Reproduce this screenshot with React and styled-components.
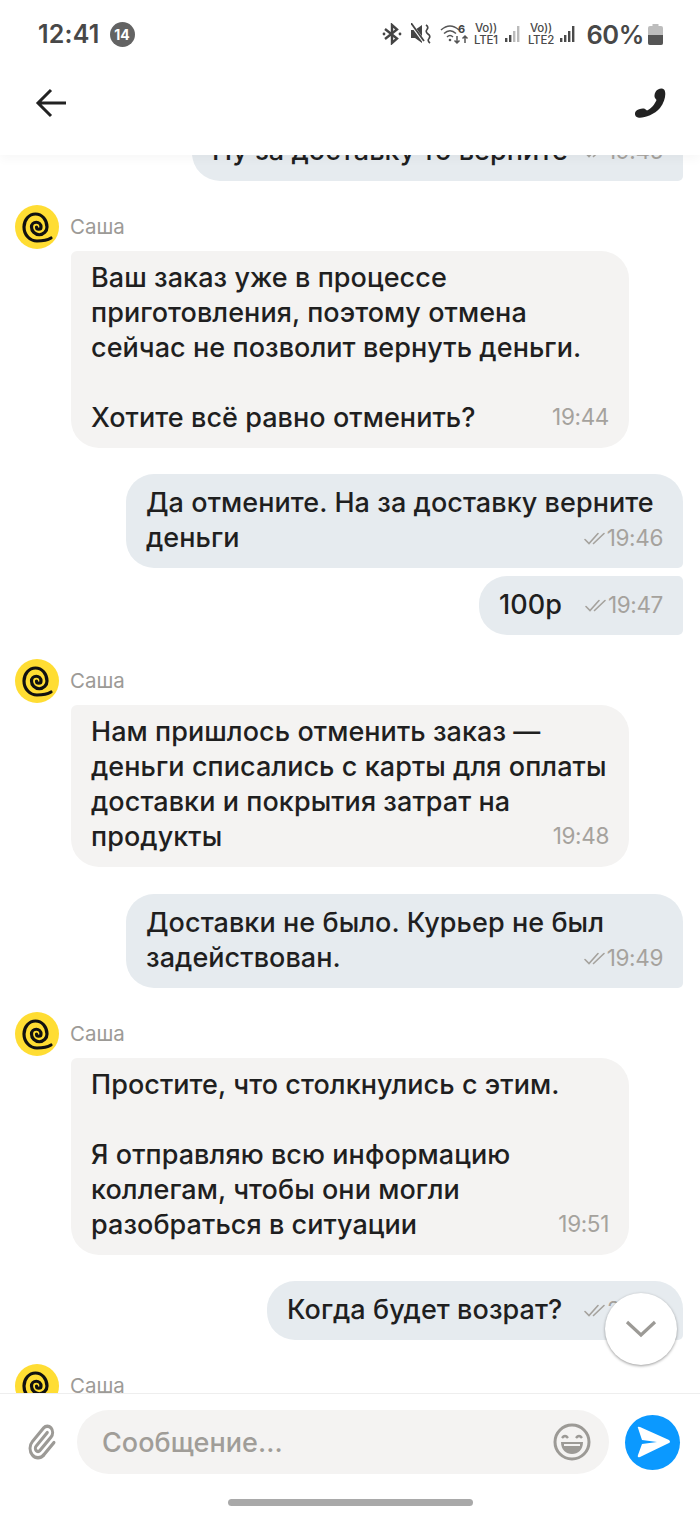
import React from "react";
import styled, { createGlobalStyle } from "styled-components";

const Global = createGlobalStyle`
  html, body { margin: 0; padding: 0; background: #fff; }
  * { box-sizing: border-box; }
`;
const FONT = `Inter, "Noto Sans", "Liberation Sans", sans-serif`;

const Screen = styled.div`
  position: relative; width: 700px; height: 1517px; overflow: hidden;
  display: flex; flex-direction: column; background: #fff; font-family: ${FONT}; color: #1f1f1f;
`;
const Top = styled.header`
  position: relative; z-index: 2; height: 155px; flex: none; background: #fff;
  box-shadow: 0 4px 10px rgba(0,0,0,.035);
`;
const StatusBar = styled.div`
  height: 68px; display: flex; align-items: center; padding: 0 37px 0 38px; color: #444;
`;
const Clock = styled.span`font-size: 25px; font-weight: 600; letter-spacing: .2px; color: #484848;`;
const Badge = styled.span`
  margin-left: 10px; width: 25px; height: 25px; border-radius: 50%; background: #636363; color: #fff;
  font-size: 14px; font-weight: 700; display: flex; align-items: center; justify-content: center;
`;
const StatusRight = styled.div`margin-left: auto; display: flex; align-items: center; gap: 6px;`;
const Volte = styled.span`
  display: flex; flex-direction: column; align-items: center; width: 25px;
  font-size: 11.5px; line-height: 12px; font-weight: 500; color: #4a4a4a; letter-spacing: -.2px;
`;
const Percent = styled.span`font-size: 25.5px; font-weight: 600; color: #484848; margin-left: 3px; letter-spacing: -.4px;`;
const NavBar = styled.nav`
  height: 87px; display: flex; align-items: flex-start; justify-content: space-between;
  padding: 19px 34px 0 35px;
`;
const Chat = styled.main`
  flex: 1; min-height: 0; overflow: hidden; display: flex; flex-direction: column;
  padding: 0 17px 0 15px;
`;
const Feed = styled.div`margin-top: -33px; display: flex; flex-direction: column; flex: none;`;
const Sender = styled.div`
  display: flex; align-items: center; gap: 11px; height: 44px; margin-top: ${p => p.$gap || 24}px;
  margin-bottom: 2px; font-size: 20.5px; color: #9c9a96; flex: none;
`;
const SenderName = styled.span`margin-top: -2px;`;
const Bubble = styled.div`
  flex: none; font-size: 27px; line-height: 35px; font-weight: 500; letter-spacing: .06px;
  ${p => p.$out ? `
    align-self: flex-end; background: #e6ebef; padding: 10.5px 20px 13.5px 20px;
    margin-top: ${p.$gap}px; width: ${p.$width}px;
    border-radius: 28px 5px 5px 28px;
    border-top-right-radius: ${p.$first ? "28px" : "5px"};
  ` : `
    margin-left: 56px; width: 558px; background: #f4f3f2; padding: 9px 20px 13px 20px;
    border-radius: 6px 28px 28px 28px;
  `}
`;
const Line = styled.div`min-height: 35px;`;
const LastLine = styled.div`display: flex; align-items: center; justify-content: space-between; gap: 12px;`;
const Meta = styled.span`
  display: flex; align-items: center; gap: 1px; font-size: 22.5px; font-weight: 400; color: #a5a29d; letter-spacing: -.35px;
  margin-top: ${p => p.$in ? "-2px" : "0"};
`;
const Ticks = styled.svg`width: 22px; height: 14px; flex: none; margin-top: 2px;`;
const ScrollDown = styled.button`
  position: absolute; left: 605px; top: 1293px; width: 72px; height: 72px; z-index: 3; padding: 0; border: 0;
  border-radius: 50%; background: #fff; box-shadow: 0 1px 3px rgba(0,0,0,.4);
  display: flex; align-items: center; justify-content: center;
`;
const Footer = styled.footer`
  position: relative; z-index: 2; height: 124px; flex: none; background: #fff; border-top: 1px solid #eeeeee;
  display: flex; flex-direction: column; align-items: center;
`;
const Composer = styled.div`
  width: 100%; display: flex; align-items: center; padding: 16px 20px 0 26px;
`;
const Attach = styled.svg`width: 32px; height: 38px; flex: none; margin-right: 19px;`;
const Field = styled.div`
  width: 532px; height: 64px; border-radius: 32px; background: #f4f3f2; display: flex; align-items: center;
  justify-content: space-between; padding: 0 18px 0 25px; font-size: 27px; font-weight: 500; color: #a09d98; letter-spacing: .05px;
`;
const SendBtn = styled.button`
  margin-left: 16px; width: 55px; height: 55px; padding: 0; border: 0; border-radius: 50%; background: #0b99ff;
  display: flex; align-items: center; justify-content: center;
`;
const HomeBar = styled.div`width: 245px; height: 7px; border-radius: 4px; background: #a9a9a9; margin-top: 25px;`;

const Avatar = () => (
  <svg width="44" height="44" viewBox="0 0 44 44">
    <circle cx="22" cy="22" r="22" fill="#ffdd33" />
    <path d="M21.5 22 A2.25 2.25 0 0 0 26 22 A4.75 4.75 0 0 0 16.5 22 A7.75 7.75 0 0 0 32 22 A11.5 13 0 0 0 9 22 C9 30 15 36 22 36 C27 36 32 35.5 36 33"
      fill="none" stroke="#111" strokeWidth="3.2" strokeLinecap="round" />
  </svg>
);
const Tick = () => (
  <Ticks viewBox="0 0 22 14">
    <path d="M1 8.5 L5 12.5 L14 2.5 M9.5 12.5 L20 2.5" fill="none" stroke="#a5a29d" strokeWidth="1.6" strokeLinecap="round" />
  </Ticks>
);
const Out = ({ lines, time, width = 557, first, gap }) => (
  <Bubble $out $width={width} $first={first} $gap={gap}>
    {lines.slice(0, -1).map(l => <Line key={l}>{l}</Line>)}
    <LastLine><span>{lines[lines.length - 1]}</span><Meta><Tick />{time}</Meta></LastLine>
  </Bubble>
);
const In = ({ lines, time, gap }) => (
  <>
    <Sender $gap={gap}><Avatar /><SenderName>Саша</SenderName></Sender>
    <Bubble>
      {lines.slice(0, -1).map((l, i) => <Line key={i}>{l}</Line>)}
      <LastLine><span>{lines[lines.length - 1]}</span><Meta $in>{time}</Meta></LastLine>
    </Bubble>
  </>
);

const Signal = ({ dim }) => (
  <svg width="18" height="20" viewBox="0 0 18 20">
    {[[1, 14, 4], [5, 11, 7], [9, 7, 11], [13, 2, 16]].map(([x, y, h], i) => (
      <rect key={x} x={x} y={y} width="2.4" height={h} fill={dim && i > 1 ? "#bbb" : "#4a4a4a"} />
    ))}
  </svg>
);

export default function App() {
  return (
    <Screen>
      <Global />
      <Top>
        <StatusBar>
          <Clock>12:41</Clock>
          <Badge>14</Badge>
          <StatusRight>
            <svg width="20" height="22" viewBox="0 0 20 22" fill="none" stroke="#444" strokeWidth="2.4" style={{ marginRight: 3 }}>
              <path d="M3 6 L15 15.5 L10 20 V2 L15 6.5 L3 16" />
              <circle cx="2" cy="11" r="1.4" fill="#444" stroke="none" /><circle cx="18" cy="11" r="1.4" fill="#444" stroke="none" />
            </svg>
            <svg width="20" height="22" viewBox="0 0 20 22" style={{ marginRight: 3 }}>
              <path d="M0 7 H4 L11 2 V20 L4 15 H0 Z" fill="#444" />
              <path d="M0 1 L14 20" stroke="#fff" strokeWidth="3" />
              <path d="M0 0 L13 18" stroke="#444" strokeWidth="1.8" />
              <path d="M15 2 q3 2 1 4.5 q-2 2 1 4.5 q3 2 1 4.5 q-2 2 1 4.5" fill="none" stroke="#444" strokeWidth="1.7" />
            </svg>
            <svg width="29" height="22" viewBox="0 0 29 22" fill="none" stroke="#555" strokeWidth="1.5" style={{ marginRight: -2 }}>
              <path d="M1 7 Q10 -1 19 7 M4 10.5 Q10 5 16 10.5 M7 14 Q10 11 13 14" />
              <circle cx="10" cy="17" r="1.3" fill="#555" stroke="none" />
              <text x="18" y="10" fontSize="11" fontWeight="700" fill="#444" stroke="none" fontFamily="Inter">6</text>
              <path d="M17 13 V20 M14.5 17.5 L17 20 L19.5 17.5 M25 20 V13 M22.5 15.5 L25 13 L27.5 15.5" />
            </svg>
            <Volte>Vo))<span>LTE1</span></Volte>
            <Signal dim />
            <Volte>Vo))<span>LTE2</span></Volte>
            <Signal />
            <Percent>60%</Percent>
            <svg width="15" height="21" viewBox="0 0 15 21" style={{ marginLeft: -2 }}>
              <rect x="4.5" y="0" width="6" height="3" fill="#bdbdbd" />
              <rect x="0" y="2" width="15" height="19" rx="2" fill="#bdbdbd" />
              <path d="M0 11 H15 V19 a2 2 0 0 1 -2 2 H2 a2 2 0 0 1 -2 -2 Z" fill="#555" />
            </svg>
          </StatusRight>
        </StatusBar>
        <NavBar>
          <svg width="32" height="32" viewBox="0 0 32 32" fill="none" stroke="#222" strokeWidth="3">
            <path d="M31 16 H4 M16 3 L3 16 L16 29" />
          </svg>
          <svg width="32" height="32" viewBox="0 0 32 32">
            <path d="M21.5 5 C23 2 28 0.5 30 2.5 C32.5 5 31.5 14 26 21 C20 28 9 31.5 4 30.5 C1 30 0 26 2 24 C4 22 9 21 11 22 L13 23.5 C17 22 21 17 22.5 13 L21 11 C20 9 20.5 7 21.5 5 Z" fill="#222" />
          </svg>
        </NavBar>
      </Top>
      <Chat>
        <Feed>
          <Out lines={["Ну за доставку то верните"]} time="19:45" width={491} first gap={0} />
          <In lines={["Ваш заказ уже в процессе", "приготовления, поэтому отмена", "сейчас не позволит вернуть деньги.", "", "Хотите всё равно отменить?"]} time="19:44" />
          <Out lines={["Да отмените. На за доставку верните", "деньги"]} time="19:46" first gap={26} />
          <Out lines={["100р"]} time="19:47" width={204} gap={8} />
          <In lines={["Нам пришлось отменить заказ —", "деньги списались с карты для оплаты", "доставки и покрытия затрат на", "продукты"]} time="19:48" />
          <Out lines={["Доставки не было. Курьер не был", "задействован."]} time="19:49" first gap={27} />
          <In lines={["Простите, что столкнулись с этим.", "", "Я отправляю всю информацию", "коллегам, чтобы они могли", "разобраться в ситуации"]} time="19:51" />
          <Out lines={["Когда будет возрат?"]} time="20:10" width={416} first gap={26} />
          <Sender>
            <Avatar /><SenderName>Саша</SenderName>
          </Sender>
        </Feed>
      </Chat>
      <ScrollDown aria-label="Вниз">
        <svg width="32" height="20" viewBox="0 0 32 20" fill="none" stroke="#9c9a96" strokeWidth="3.2"><path d="M2 3 L16 16 L30 3" /></svg>
      </ScrollDown>
      <Footer>
        <Composer>
          <Attach viewBox="0 0 24 24" fill="none" stroke="#9c9a96" strokeWidth="2.2" strokeLinecap="round" strokeLinejoin="round" preserveAspectRatio="none">
            <path d="M13.234 20.252 21 12.3" /><path d="m16 6-8.414 8.586a2 2 0 0 0 0 2.828 2 2 0 0 0 2.828 0l8.414-8.586a4 4 0 0 0 0-5.656 4 4 0 0 0-5.656 0l-8.415 8.585a6 6 0 1 0 8.486 8.486" />
          </Attach>
          <Field>
            Сообщение...
            <svg width="38" height="38" viewBox="0 0 38 38" fill="none" stroke="#9c9a96">
              <circle cx="19" cy="19" r="17" strokeWidth="3" />
              <path d="M9 15 q3 -4 6 0 M23 15 q3 -4 6 0" strokeWidth="2.4" />
              <path d="M8 19 H30 C30 27 25 31 19 31 C13 31 8 27 8 19 Z" fill="#9c9a96" stroke="none" />
              <path d="M11 21 H27 V23 H11 Z" fill="#f4f3f2" stroke="none" />
            </svg>
          </Field>
          <SendBtn aria-label="Отправить">
            <svg width="34" height="34" viewBox="0 0 34 34"><path d="M2 3 Q1 1 4 2 L33 15 Q35 17 33 18 L4 32 Q1 33 2 30 L6 19 L21 17 L6 15 Z" fill="#fff" /></svg>
          </SendBtn>
        </Composer>
        <HomeBar />
      </Footer>
    </Screen>
  );
}
